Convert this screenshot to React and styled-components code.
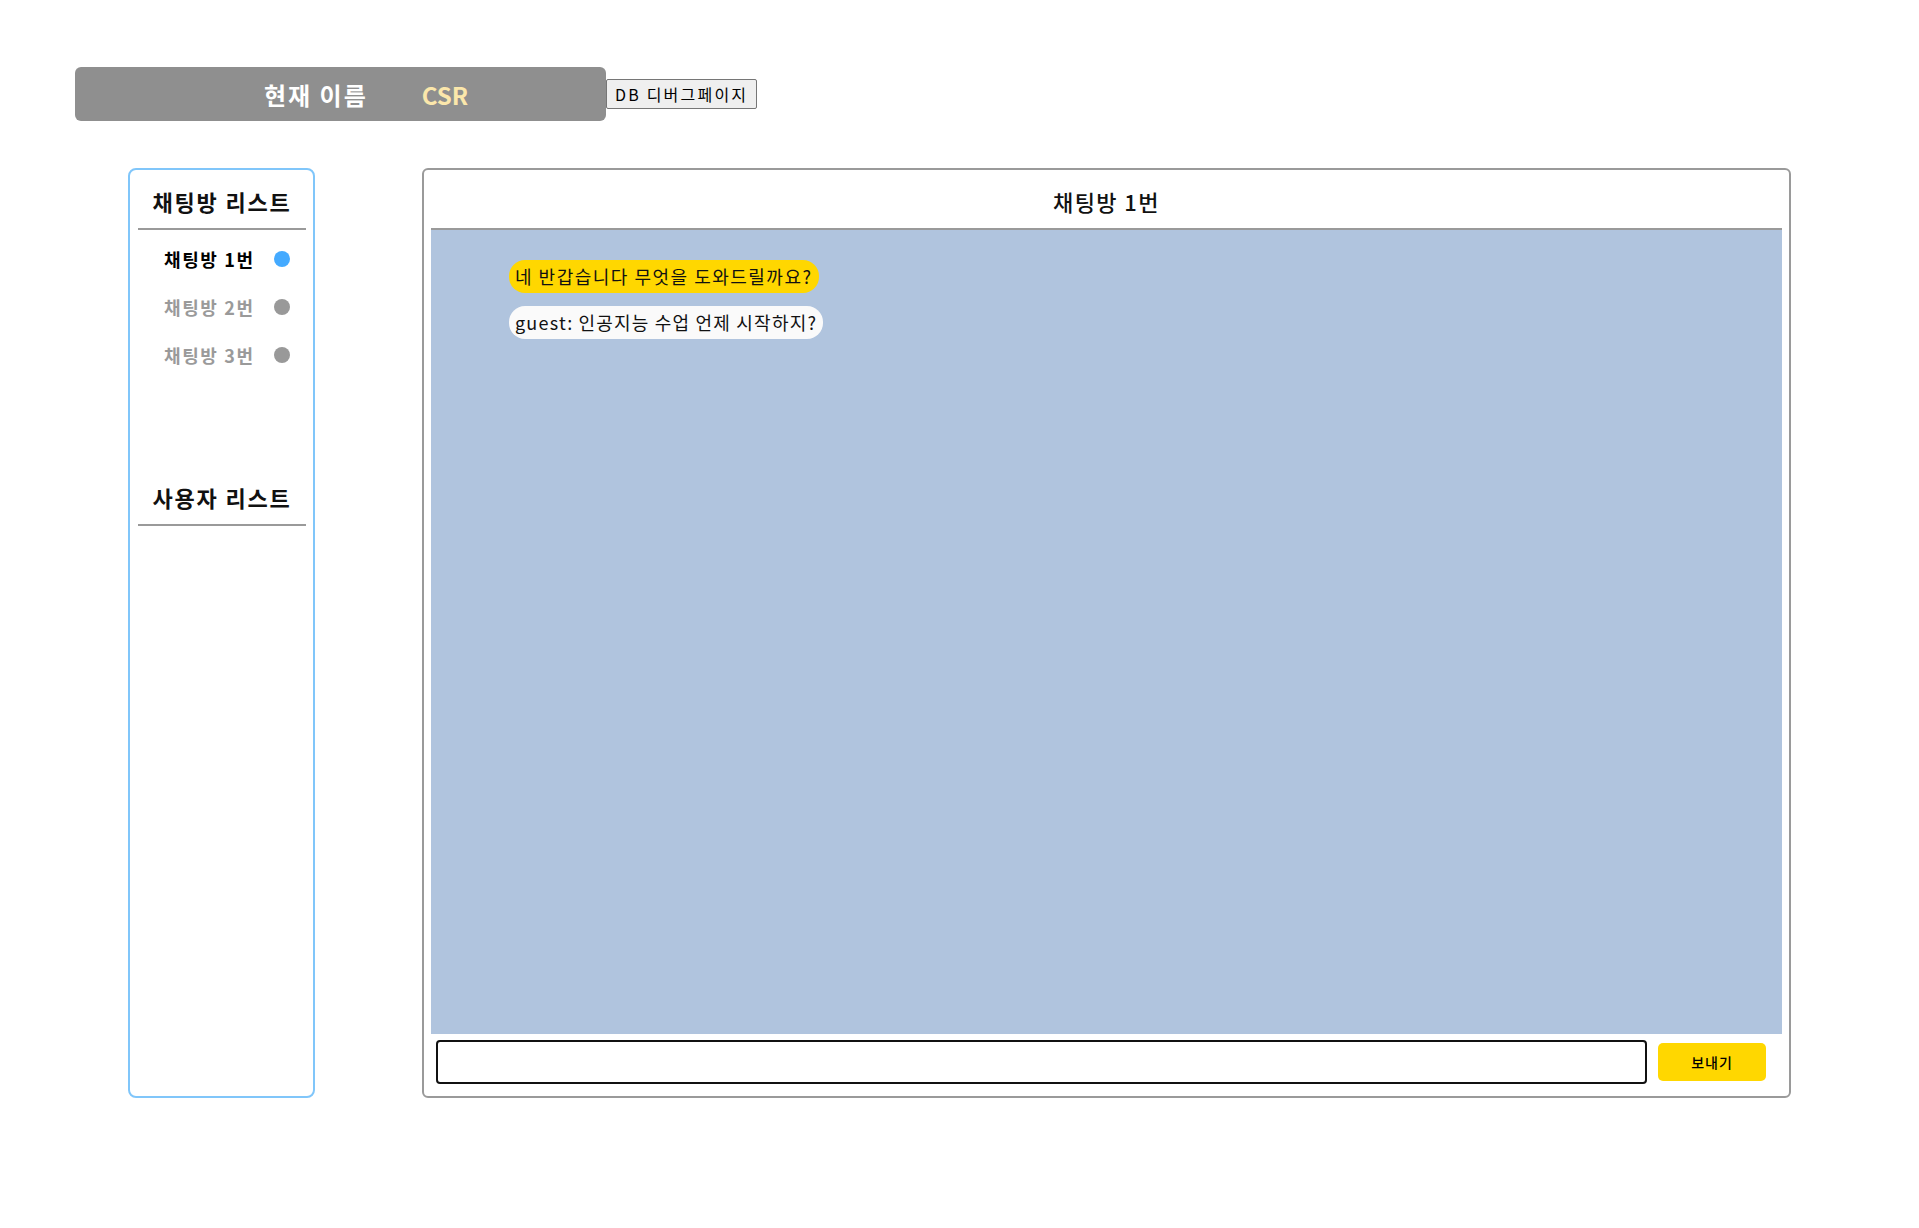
import React, { useState } from "react";
import styled, { createGlobalStyle } from "styled-components";

const GlobalStyle = createGlobalStyle`
  body {
    margin: 0;
    background: #fff;
    font-family: "Noto Sans CJK KR", "Noto Sans", sans-serif;
    color: #111;
  }
`;

const Page = styled.div`
  width: 1919px;
  height: 1228px;
  box-sizing: border-box;
  padding-top: 67px;
`;

const TopBar = styled.div`
  display: flex;
  align-items: center;
  padding-left: 75px;
`;

const NameBar = styled.div`
  width: 531px;
  height: 54px;
  box-sizing: border-box;
  background-color: #8f8f8f;
  border-radius: 6px;
  display: flex;
  align-items: center;
  padding-left: 189px;
  gap: 54px;
  font-size: 24px;
  font-weight: 700;
  color: #fff;
  span {
    line-height: 1;
    padding-top: 2px;
  }
  .title {
    letter-spacing: 2px;
  }
  .name {
    color: #fbe7ab;
  }
`;

const DebugButton = styled.button`
  height: 30px;
  padding: 0 8px;
  background-color: #efefef;
  border: 1px solid #767676;
  border-radius: 2px;
  font-family: "Noto Sans CJK KR", sans-serif;
  font-size: 16px;
  letter-spacing: 2.2px;
  color: #000;
  line-height: 1;
`;

const Main = styled.div`
  display: flex;
  gap: 107px;
  margin-top: 47px;
  padding: 0 128px;
  height: 930px;
`;

const Sidebar = styled.div`
  width: 187px;
  box-sizing: border-box;
  border: 2px solid #80c6fa;
  border-radius: 8px;
  padding: 0 7px 0 8px;
`;

const SectionTitle = styled.div`
  padding-top: 14px;
  padding-bottom: 10px;
  line-height: 34px;
  font-size: 22px;
  font-weight: 700;
  letter-spacing: 1.8px;
  text-align: center;
  border-bottom: 2px solid #9a9a9a;
  margin-top: ${(p) => p.$top || 0}px;
`;

const RoomList = styled.div`
  margin-top: 5px;
`;

const RoomItem = styled.div`
  height: 48px;
  display: flex;
  align-items: center;
  padding-left: 26px;
  gap: 19px;
  font-size: 18px;
  font-weight: 700;
  letter-spacing: 1.6px;
  color: ${(p) => (p.$active ? "#000" : "#9a9a9a")};
  cursor: pointer;
`;

const Dot = styled.span`
  width: 16px;
  height: 16px;
  border-radius: 50%;
  background-color: ${(p) => (p.$active ? "#44aaff" : "#999")};
`;

const ChatPanel = styled.div`
  flex: 1;
  box-sizing: border-box;
  border: 2px solid #9a9a9a;
  border-radius: 6px;
  padding: 0 7px 12px 7px;
  display: flex;
  flex-direction: column;
`;

const ChatTitle = styled.div`
  height: 60px;
  box-sizing: border-box;
  padding-top: 15px;
  line-height: 32px;
  font-size: 22px;
  font-weight: 500;
  letter-spacing: 1.4px;
  text-align: center;
  border-bottom: 2px solid #9a9a9a;
`;

const ChatArea = styled.div`
  flex: 1;
  background-color: #b0c4de;
  padding: 30px 0 0 78px;
  display: flex;
  flex-direction: column;
  align-items: flex-start;
  gap: 13px;
`;

const Bubble = styled.div`
  height: 33px;
  line-height: 33px;
  padding: 0 6px;
  border-radius: 16px;
  font-size: 18px;
  letter-spacing: ${(p) => (p.$bot ? 1.5 : 1.2)}px;
  color: #111;
  background-color: ${(p) => (p.$bot ? "#ffd700" : "#fafafa")};
  white-space: nowrap;
`;

const InputRow = styled.div`
  display: flex;
  align-items: center;
  gap: 11px;
  margin-top: 6px;
  padding: 0 16px 0 5px;
`;

const MessageInput = styled.input`
  flex: 1;
  height: 44px;
  box-sizing: border-box;
  border: 2px solid #111;
  border-radius: 4px;
  padding: 0 6px;
  font-size: 16px;
  outline: none;
`;

const SendButton = styled.button`
  width: 108px;
  height: 38px;
  border: none;
  border-radius: 5px;
  background-color: #ffd700;
  font-family: "Noto Sans CJK KR", sans-serif;
  font-size: 14px;
  font-weight: 500;
  letter-spacing: 1px;
  color: #000;
`;

const rooms = ["채팅방 1번", "채팅방 2번", "채팅방 3번"];

const messages = [
  { id: 1, bot: true, text: "네 반갑습니다 무엇을 도와드릴까요?" },
  { id: 2, bot: false, text: "guest: 인공지능 수업 언제 시작하지?" },
];

const App = () => {
  const [active, setActive] = useState(0);
  const [input, setInput] = useState("");

  return (
    <Page>
      <GlobalStyle />
      <TopBar>
        <NameBar>
          <span className="title">현재 이름</span>
          <span className="name">CSR</span>
        </NameBar>
        <DebugButton>DB 디버그페이지</DebugButton>
      </TopBar>
      <Main>
        <Sidebar>
          <SectionTitle>채팅방 리스트</SectionTitle>
          <RoomList>
            {rooms.map((room, i) => (
              <RoomItem key={room} $active={i === active} onClick={() => setActive(i)}>
                {room}
                <Dot $active={i === active} />
              </RoomItem>
            ))}
          </RoomList>
          <SectionTitle $top={87}>사용자 리스트</SectionTitle>
        </Sidebar>
        <ChatPanel>
          <ChatTitle>{rooms[active]}</ChatTitle>
          <ChatArea>
            {messages.map((m) => (
              <Bubble key={m.id} $bot={m.bot}>
                {m.text}
              </Bubble>
            ))}
          </ChatArea>
          <InputRow>
            <MessageInput
              autoFocus
              value={input}
              onChange={(e) => setInput(e.target.value)}
            />
            <SendButton>보내기</SendButton>
          </InputRow>
        </ChatPanel>
      </Main>
    </Page>
  );
};

export default App;
